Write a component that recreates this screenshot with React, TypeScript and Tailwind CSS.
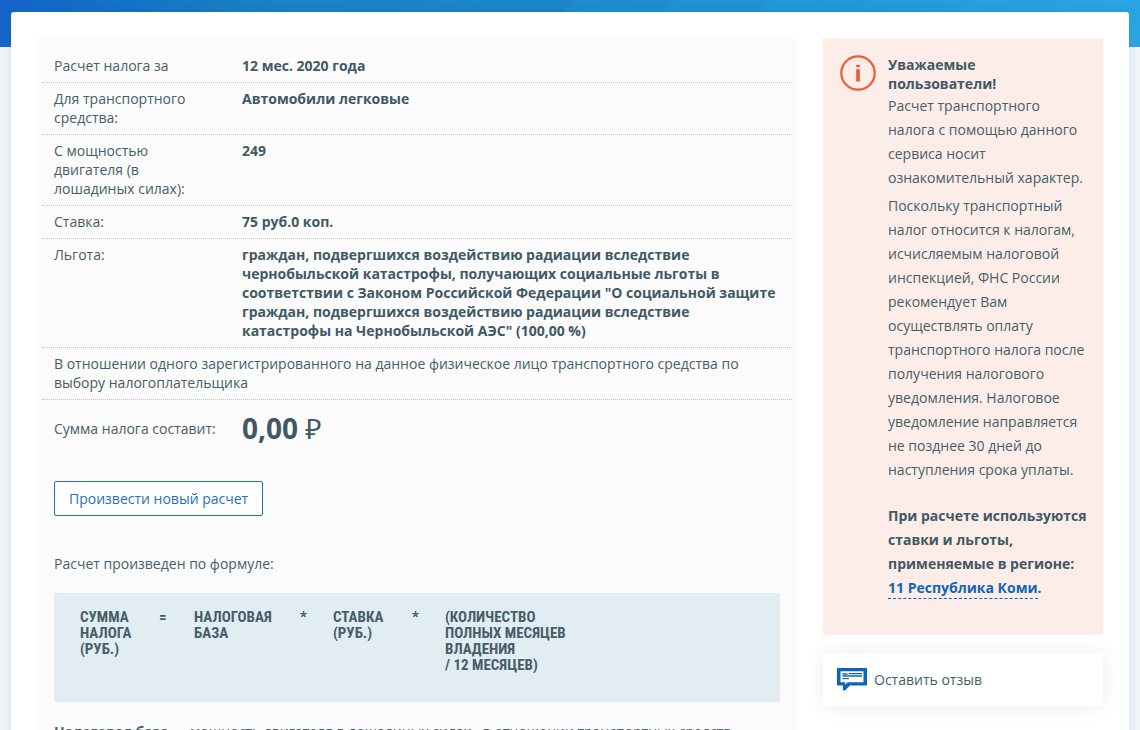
const rows = [
  { label: "Расчет налога за", value: "12 мес. 2020 года" },
  { label: "Для транспортного средства:", value: "Автомобили легковые" },
  { label: "С мощностью двигателя (в лошадиных силах):", value: "249" },
  { label: "Ставка:", value: "75 руб.0 коп." },
  {
    label: "Льгота:",
    value:
      'граждан, подвергшихся воздействию радиации вследствие чернобыльской катастрофы, получающих социальные льготы в соответствии с Законом Российской Федерации "О социальной защите граждан, подвергшихся воздействию радиации вследствие катастрофы на Чернобыльской АЭС" (100,00 %)',
  },
];

const InfoIcon = () => (
  <svg viewBox="0 0 36 36" className="w-9 h-9 shrink-0" fill="none" aria-hidden="true">
    <circle cx="18" cy="18" r="16.7" stroke="#f15a31" strokeWidth="2.2" />
    <path d="M18 14.2v12.3" stroke="#f15a31" strokeWidth="3.6" />
    <path d="M16.2 9.8h3.6v2.3h-3.6z" fill="#f15a31" />
  </svg>
);

const FeedbackIcon = () => (
  <svg viewBox="0 0 30 23" className="w-[30px] h-[23px] shrink-0" aria-hidden="true">
    <path
      fill="#0d66b5"
      fillRule="evenodd"
      d="M1 0h28c.6 0 1 .4 1 1v15.500c0 .6-.4 1-1 1H13l-4.800 4.700c-.8.8-2.200.4-2.200-.8v-3.900H1c-.6 0-1-.4-1-1V1c0-.6.4-1 1-1zM3.500 3.200v11h4.700v2.300l2.600-2.300h15.700v-11z"
    />
    <path d="M5.5 6h5M11.500 5.600h13.500M5.500 8h19.500" stroke="#0d66b5" strokeWidth="1.400" />
    <path d="M5.500 10.600h6.500" stroke="#0d66b5" strokeWidth="1.200" />
  </svg>
);

const HeaderBand = () => (
  <div className="h-[47px] overflow-hidden bg-linear-to-r from-[#1464cb] via-[#1a84c4] via-25% to-[#1c8ed6]">
    <svg className="w-full h-full" viewBox="0 0 1140 47" preserveAspectRatio="none" aria-hidden="true">
      <g fill="#3cc0f2" fillOpacity="0.1">
        <path d="M565 8l10-8h565v47H550z" />
        <path d="M665 8l10-8h465v47H650z" />
        <path d="M765 3l8-3h367v47H745z" />
        <path d="M860 6l10-6h270v47H840z" />
        <path d="M960 6l12-6h168v47H935z" />
        <path d="M1058 6l12-6h70v47h-107z" />
      </g>
    </svg>
  </div>
);

const Formula = () => (
  <div className="flex min-h-[109px] px-[26px] py-4 bg-[#e1ecf3] font-['Roboto_Condensed','Liberation_Sans_Narrow','Roboto',sans-serif] text-[15px] leading-4 font-bold uppercase">
    <div className="w-[79px] pr-6">Сумма налога (руб.)</div>
    <div className="w-[35px]">=</div>
    <div className="w-[106px] pr-6">Налоговая база</div>
    <div className="w-[33px]">*</div>
    <div className="w-[79px] pr-6">Ставка (руб.)</div>
    <div className="w-[33px]">*</div>
    <div>
      (количество
      <br />
      полных месяцев
      <br />
      владения
      <br />/ 12 месяцев)
    </div>
  </div>
);

const App = () => {
  return (
    <div className="min-h-screen bg-[#f1f5fa] font-['Open_Sans','Noto_Sans',sans-serif] text-[14px] leading-[19px] text-[#465e6a]">
      <HeaderBand />
      <div className="relative -mt-[35px] mx-[11px] flex items-start gap-[26px] rounded-t-[3px] bg-white p-[26px] shadow-[0_0_12px_rgba(30,60,90,0.12)]">
        {/* Calculation result */}
        <main className="min-w-0 flex-1 bg-[#fbfbfb] px-[5px] pt-3 pb-10">
          <dl>
            {rows.map((row) => (
              <div key={row.label} className="flex px-3 pt-[6px] pb-[7px] border-b border-dotted border-[#bfc5c8]">
                <dt className="w-[188px] shrink-0 pr-8">{row.label}</dt>
                <dd className="font-bold text-[#405965]">{row.value}</dd>
              </div>
            ))}
          </dl>
          <p className="px-3 pt-[6px] pb-[7px] border-b border-dotted border-[#bfc5c8]">
            В отношении одного зарегистрированного на данное физическое лицо транспортного средства по выбору налогоплательщика
          </p>
          <div className="flex items-center px-3 pt-[10px]">
            <span className="w-[188px] shrink-0">Сумма налога составит:</span>
            <span className="text-[28px] leading-9 text-[#405965]">
              <b>0,00</b> ₽
            </span>
          </div>

          <div className="px-3 pt-[35px]">
            <button
              type="button"
              className="h-[35px] px-[14px] rounded-[2px] border border-[#1f70b8] bg-white text-[#1f70b8]"
            >
              Произвести новый расчет
            </button>
            <p className="pt-[38px] pb-5">Расчет произведен по формуле:</p>
            <Formula />
            <p className="pt-5">
              <b>Налоговая база</b> — мощность двигателя в лошадиных силах - в отношении транспортных средств
            </p>
          </div>
        </main>

        {/* Sidebar */}
        <aside className="w-[280px] shrink-0">
          <div className="flex gap-3 bg-[#fdede8] pt-[17px] pr-4 pb-[35px] pl-[17px]">
            <InfoIcon />
            <div className="leading-6">
              <h2 className="pb-px font-bold leading-[19px] text-[#405965]">Уважаемые пользователи!</h2>
              <p className="pb-1">Расчет транспортного налога с помощью данного сервиса носит ознакомительный характер.</p>
              <p>
                Поскольку транспортный налог относится к налогам, исчисляемым налоговой инспекцией, ФНС России
                рекомендует Вам осуществлять оплату транспортного налога после получения налогового уведомления.
                Налоговое уведомление направляется не позднее 30 дней до наступления срока уплаты.
              </p>
              <p className="pt-[22px] font-bold text-[#405965]">
                При расчете используются ставки и льготы, применяемые в регионе:{" "}
                <a href="#region" className="pb-px border-b border-dashed border-[#0d66b5] text-[#0d66b5]">
                  11 Республика Коми
                </a>
                .
              </p>
            </div>
          </div>
          <a
            href="#feedback"
            className="mt-[18px] flex h-[53px] items-center gap-[7px] bg-white pl-[14px] shadow-[0_0_20px_rgba(0,0,0,0.08)]"
          >
            <FeedbackIcon />
            Оставить отзыв
          </a>
        </aside>
      </div>
    </div>
  );
};

export default App;
